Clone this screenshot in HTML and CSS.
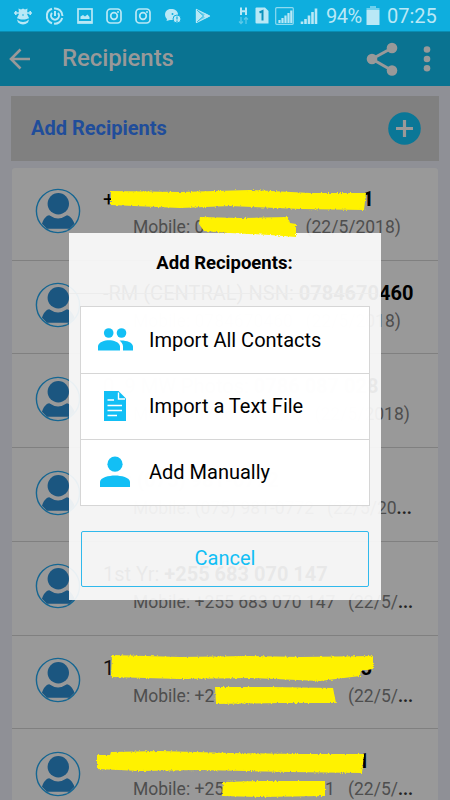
FILE: index.html
```html
<!DOCTYPE html>
<html lang="en">
<head>
<meta charset="utf-8">
<title>Recipients</title>
<link rel="stylesheet" href="styles.css">
</head>
<body>
<svg class="defs" width="0" height="0">
  <symbol id="avatar" viewBox="0 0 46 46">
    <circle cx="23" cy="23" r="21.6" fill="none" stroke="#156692" stroke-width="1.4"/>
    <circle cx="23.3" cy="15.8" r="10.7" fill="#1b5680"/>
    <path d="M7 35.8C8.500 31 11 27.800 14.200 27.300Q23 33.500 32 27.300C36 28.500 38 32 39.500 35.800L34.500 40.800H12Z" fill="#1b5680"/>
    <path d="M15 41.800H32.500" stroke="#999" stroke-width="1"/>
  </symbol>
  <symbol id="insta" viewBox="0 0 16 16">
    <rect x="1" y="1" width="14" height="14" rx="3.500" fill="none" stroke="#b9e8f6" stroke-width="1.700"/>
    <circle cx="8" cy="8" r="3.300" fill="none" stroke="#b9e8f6" stroke-width="1.700"/>
    <circle cx="12" cy="4" r="1" fill="#b9e8f6"/>
  </symbol>
</svg>
<div class="screen">
  <div class="status">
    <div class="notes">
      <svg width="20" height="18" viewBox="0 0 20 18" fill="#b9e8f6"><path d="M5.500 1.500L8 2.500L10 1.500L12 2.500L14.500 1.500L14 7L16 11C14 13 6 13 4 11L6 7Z"/><path d="M1 6H6M14 6H19M2.800 4V8M17.200 4V8" stroke="#b9e8f6" stroke-width="1.600"/><path d="M4 12.500Q10 17.500 16 12.500L15 15.500Q10 19.500 5 15.500Z"/><path d="M5 12Q10 15.500 15 12" fill="none" stroke="#0eaede"/><circle cx="10" cy="8" r=".8" fill="#0eaede"/></svg>
      <svg width="18" height="18" viewBox="0 0 18 18" fill="none" stroke="#b9e8f6" stroke-width="2"><path d="M6 1.800A7.600 7.600 0 0 0 6 16.200M8 16.600A7.600 7.600 0 0 0 16.200 11M16.500 9A7.600 7.600 0 0 0 8 1.500"/><path d="M6 6A4 4 0 1 0 12 6M9 4V9"/></svg>
      <svg width="16" height="16" viewBox="0 0 16 16"><rect x="1" y="1" width="14" height="14" fill="none" stroke="#b9e8f6" stroke-width="1.700"/><path d="M3.500 11V8.500L6 7L8 8.500L10.500 6.500L12.500 9V11ZM1 13H15V15H1Z" fill="#b9e8f6"/></svg>
      <svg width="16" height="16"><use href="#insta"/></svg>
      <svg width="16" height="16"><use href="#insta"/></svg>
      <svg width="18" height="16" viewBox="0 0 18 16"><path d="M7 1C3 1 1 3.500 1 6.500C1 9 2.500 10.500 3 11L2.500 13L6 12H10C13 11 14 9 14 6.500C14 3 11 1 7 1Z" fill="#b9e8f6"/><circle cx="8.500" cy="6" r="1" fill="#0eaede"/><circle cx="13" cy="11" r="4" fill="#b9e8f6" stroke="#0eaede"/><path d="M13 8.500V11.500M13 12.500V14" stroke="#0eaede" stroke-width="1.200"/></svg>
      <svg width="16" height="16" viewBox="0 0 16 16" stroke="#b9e8f6" stroke-width="1.200" stroke-linejoin="round"><path d="M1.500 1.500V14.500L14.500 8Z" fill="#6fd0ec"/><path d="M2 2L8.500 8L2 14" fill="#b9e8f6" stroke="#0eaede" stroke-width=".8"/><path d="M10.500 5.500L8.500 8L10.500 10.500L15 8Z" fill="#b9e8f6" stroke="none"/><path d="M1.500 1.500V14.500" /></svg>
    </div>
    <div class="signals">
      <svg width="11" height="18" viewBox="0 0 11 18"><path d="M3 .5V8M8 .5V8M3 4.300H8" stroke="#b9e8f6" stroke-width="2"/><path d="M3 10V16.500M1 14.500L3 16.500L5 14.500M8 17V10.500M6 12.500L8 10.500L10 12.500" stroke="#5cc9e9" stroke-width="1.300" fill="none"/></svg>
      <svg width="14" height="17" viewBox="0 0 14 17"><path d="M1.500 .5H10L13.500 4V16.500H1.500Q.5 16.500.5 15.500V1.500Q.5.500 1.500.500Z" fill="#b9e8f6"/><path d="M4.500 5.500L7.500 4V13.500" fill="none" stroke="#0b91bb" stroke-width="2"/></svg>
      <svg width="19" height="18" viewBox="0 0 19 18"><rect x=".7" y=".7" width="17.600" height="16.600" rx="1" fill="none" stroke="#8edaf0" stroke-width="1.200"/><path d="M4.500 16V13M7.500 16V11M10.500 16V8.500M13.500 16V6M16.300 16V3.500" stroke="#b9e8f6" stroke-width="2.200"/></svg>
      <svg width="18" height="18" viewBox="0 0 18 18"><path d="M2 17V14.500M5.500 17V12M9 17V8.500M12.500 17V5M16 17V1.500" stroke="#b9e8f6" stroke-width="2.600"/></svg>
      <span class="pct">94%</span>
      <svg class="battery" width="14" height="20" viewBox="0 0 14 20"><path d="M4 0H10V2H13.500V4H.5V2H4Z" fill="#6ed0ed"/><path d="M.5 4H13.500V19H.5Z" fill="#b9e8f6"/></svg>
      <span class="clock">07:25</span>
    </div>
  </div>
  <header class="bar">
    <svg class="back" width="22" height="22" viewBox="0 0 22 22" fill="none" stroke="#999" stroke-width="2.600"><path d="M21 11H2.500M11.500 1.500L2 11L11.500 20.500"/></svg>
    <h1>Recipients</h1>
    <svg class="share" width="32" height="34" viewBox="0 0 32 34" fill="#999"><path d="M26 6L6 17L26 28.500" fill="none" stroke="#999" stroke-width="3"/><circle cx="26" cy="6" r="5.300"/><circle cx="6" cy="17" r="5.300"/><circle cx="26" cy="28.500" r="5.300"/></svg>
    <svg class="dots" width="8" height="28" viewBox="0 0 8 28" fill="#999"><circle cx="4" cy="4.500" r="3.300"/><circle cx="4" cy="14" r="3.300"/><circle cx="4" cy="23.300" r="3.300"/></svg>
  </header>
  <main>
    <div class="add"><span>Add Recipients</span>
      <svg width="33" height="33" viewBox="0 0 33 33"><circle cx="16.500" cy="16.500" r="16.300" fill="#0a7797"/><path d="M16.500 8V25M8 16.500H25" stroke="#999" stroke-width="3.200"/></svg>
    </div>
    <ul class="list">
      <li><svg class="avatar"><use href="#avatar"/></svg><div><p class="name ends"><span class="plus">+</span><b>1</b></p><p class="phone">Mobile: 0 <span class="date d1">(22/5/2018)</span></p></div></li>
      <li class="struck"><svg class="avatar"><use href="#avatar"/></svg><div><p class="name">-RM (CENTRAL) NSN: <b>0784670460</b></p><p class="phone">Mobile: 0784670460 <span class="date d1">(22/5/2018)</span></p></div></li>
      <li><svg class="avatar"><use href="#avatar"/></svg><div><p class="name n3">0. 9 MW Photos: <b>0786 087 028</b></p><p class="phone">Mobile: 0786 087 028 <span class="date d3">(22/5/2018)</span></p></div></li>
      <li><svg class="avatar"><use href="#avatar"/></svg><div><p class="name">Ab: <b>(075) 981-0772</b></p><p class="phone">Mobile: (075) 981-0772 <span class="date d4">(22/5/20<b>...</b></span></p></div></li>
      <li><svg class="avatar"><use href="#avatar"/></svg><div><p class="name">1st Yr: <b>+255 683 070 147</b></p><p class="phone">Mobile: +255 683 070 147 <span class="date d5">(22/5/<b>...</b></span></p></div></li>
      <li><svg class="avatar"><use href="#avatar"/></svg><div><p class="name ends e6"><span>1</span><b>5</b></p><p class="phone">Mobile: +2 <span class="date d5">(22/5/<b>...</b></span></p></div></li>
      <li><svg class="avatar"><use href="#avatar"/></svg><div><p class="name n7"><b>1</b></p><p class="phone">Mobile: +25 <span class="one">1</span><span class="date d5">(22/5/<b>...</b></span></p></div></li>
    </ul>
  </main>
  <div class="dialog">
    <h2>Add Recipoents:</h2>
    <div class="menu">
      <div class="item"><svg width="36" height="24" viewBox="0 0 36 24" fill="#12bff5"><circle cx="11.700" cy="5" r="4.800"/><circle cx="24.500" cy="5" r="4.800"/><path d="M1 22.500V18.500C1 14 8 12.200 12 12.200S23 14 23 18.500V22.500ZM22.500 12.500C28 12 36 14 36 18.500V22.500H26V18.500C26 16 24.500 14 22.500 12.500Z"/></svg><span>Import All Contacts</span></div>
      <div class="item"><svg width="36" height="30" viewBox="0 0 36 30"><path d="M7 0H21.500L29 7.500V30H7Z" fill="#12bff5"/><path d="M21.500 1.500V8H28M10.500 9H17M10.500 14.500H25M10.500 19.500H25M10.500 24.500H20" fill="none" stroke="#fff" stroke-width="1.400"/></svg><span>Import a Text File</span></div>
      <div class="item"><svg width="36" height="32" viewBox="0 0 36 32" fill="#12bff5"><circle cx="18" cy="8.200" r="7.600"/><path d="M3 31V26C3 21.500 12 19.500 18 19.500S33 21.500 33 26V31Z"/></svg><span>Add Manually</span></div>
    </div>
    <button class="cancel">Cancel</button>
  </div>
  <svg class="marker" width="450" height="800" viewBox="0 0 450 800">
    <filter id="rough" x="-5%" y="-20%" width="110%" height="140%"><feTurbulence type="fractalNoise" baseFrequency=".6" numOctaves="2" seed="4"/><feDisplacementMap in="SourceGraphic" scale="3"/></filter>
    <g fill="#fff200" filter="url(#rough)">
      <path d="M111 191L180 192L250 190L310 193L366 193L364 210L300 209L230 206L180 208L111 205Z"/>
      <path d="M200 217L240 218L288 217L290 223L296 224L296 237L270 235L230 233L204 231L199 224Z"/>
      <path d="M112 655L180 657L250 656L300 657L373 656L373 669L367 670L361 670L360 676L320 681L250 678L180 679L111 677Z"/>
      <path d="M215 687L270 687L333 688L336 703L280 703L216 704Z"/>
      <path d="M97 755L110 755L111 752L160 751L230 753L300 754L364 754L362 773L290 772L200 770L140 771L97 769Z"/>
      <path d="M223 782L260 781L325 781L325 796L260 797L222 796Z"/>
    </g>
  </svg>
</div>
</body>
</html>
```
FILE: styles.css
```css
* { box-sizing: border-box; }
body { margin: 0; font-family: Roboto, "Liberation Sans", sans-serif; }
h1, h2, p, ul { margin: 0; padding: 0; }
.defs { position: absolute; }
.screen { position: relative; width: 450px; height: 800px; overflow: hidden; background: #8f9096; }
.status { height: 31px; background: #0eaede; display: flex; align-items: center; color: #b9e8f6; }
.notes { display: flex; align-items: center; width: 198px; margin-left: 13px; justify-content: space-between; }
.signals { display: flex; align-items: center; margin-left: 27px; }
.signals svg { margin-right: 6px; flex: none; }
.pct { font-size: 20px; width: 38px; margin-left: 2px; letter-spacing: -.5px; }
.signals .battery { margin: 0 7px 0 2px; }
.clock { font-size: 20px; letter-spacing: 0; }
.bar { height: 55px; background: #0a7391; display: flex; align-items: center; padding: 0 0 1px 9px; border-top: 1px solid #098db3; }
.bar h1 { font-size: 24px; font-weight: 500; letter-spacing: -.1px; line-height: 28px; padding-bottom: 1px; color: #999; margin-left: 31px; width: 304px; }
.share { margin-right: 25px; }
main { padding: 10px 12px 0 11px; }
.add { width: 428px; height: 65px; background: #808080; display: flex; align-items: center; justify-content: space-between; padding: 0 18px 1px 20px; }
.add span { color: #204d9a; font-size: 20px; font-weight: 700; }
.list { list-style: none; margin: 7px 0 0 1px; width: 426px; height: 632px; overflow: hidden; background: #999; border-radius: 3px 3px 0 0; }
.list li { height: 93.75px; border-bottom: 1px solid #808080; display: flex; }
.list li:first-child { margin-top: -1.250px; }
.struck { position: relative; }
.struck::after { content: ""; position: absolute; left: 57px; top: 32px; width: 308px; height: 1px; background: #333; }
.avatar { width: 46px; height: 46px; margin: 21.500px 22.500px 0 22.500px; flex: none; }
.name { font-size: 20px; line-height: 28px; padding-top: 18px; height: 46px; white-space: nowrap; color: #111; }
.name b { color: #000; }
.name.ends { display: flex; justify-content: space-between; width: 271px; }
.name.e6 { width: 269px; }
.plus { font-weight: 400; color: #000; }
.phone { position: relative; font-size: 17.500px; line-height: 24px; margin: 2px 0 0 30px; width: 300px; height: 24px; color: #4e4e4e; white-space: nowrap; }
.phone b { color: #222; }
.date { position: absolute; top: 0; }
.d1 { left: 172.500px; }
.d3 { left: 181.500px; }
.d4 { left: 194px; }
.d5 { left: 215px; }
.one { position: absolute; left: 192px; top: 0; }
.n7 { padding-left: 255px; }
.list div { width: 330px; }
.dialog { position: absolute; left: 69px; top: 233px; width: 312px; height: 367px; padding: 17px 12px 0 11px; background: rgba(252, 252, 252, .92); }
.dialog h2 { font-size: 18.500px; font-weight: 700; line-height: 26px; height: 25px; text-align: center; }
.menu { width: 290px; margin-top: 31px; border: 1px solid #d6d6d6; background: rgba(255, 255, 255, .94); }
.item { height: 66px; display: flex; align-items: center; padding: 0 0 1px 16px; font-size: 20px; }
.item + .item { border-top: 1px solid #d6d6d6; }
.item span { margin-left: 16px; white-space: nowrap; }
.cancel { display: block; margin: 25px 0 0 1px; width: 288px; height: 56px; border: 1px solid #30b9ec; border-radius: 2px; background: transparent; color: #12bff5; font: 20px Roboto, sans-serif; padding: 0 0 2px; }
.marker { position: absolute; left: 0; top: 0; }
```
